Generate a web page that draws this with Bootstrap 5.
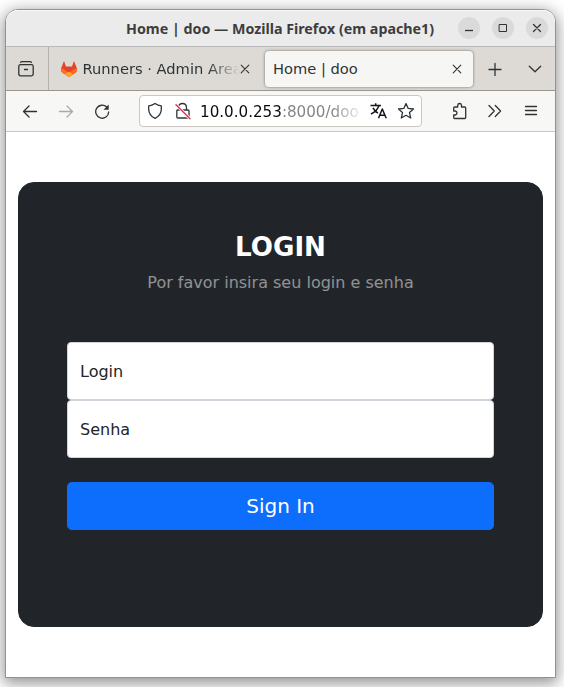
<!DOCTYPE html>
<html lang="pt-BR">
<head>
<meta charset="utf-8">
<meta name="viewport" content="width=device-width, initial-scale=1">
<title>Home | doo</title>
<link href="https://cdn.jsdelivr.net/npm/bootstrap@5.3.0/dist/css/bootstrap.min.css" rel="stylesheet">
<style>
body{font-family:"DejaVu Sans",sans-serif;background:#fff;height:687px;overflow:hidden;padding:9px 8px 9px 5px;color:#212529}
svg{display:block;flex:none;fill:none;stroke:#2e3436;stroke-width:1.3;stroke-linecap:round;stroke-linejoin:round}
.window{height:669px;border:1px solid #929292;border-radius:13px 13px 0 0;box-shadow:0 4px 14px 1px rgba(0,0,0,.36),0 2px 20px 3px rgba(0,0,0,.1);background:#fff}
.titlebar{height:37px;background:#ebebeb;border-bottom:1px solid #b9b9b9;border-radius:12px 12px 0 0;box-shadow:inset 0 1px #f9f9f9;display:grid;grid-template-columns:120px 308px 1fr;align-items:center}
.titlebar strong{font:700 14.25px "Noto Sans",sans-serif;color:#3d3d3d;white-space:nowrap}
.win-btn{width:22px;height:22px;background:#dadada;padding:0}
.tabs{height:44px;background:#dddad5;border-bottom:1px solid #9b968e}
.tabs-view{width:43px;border-right:1px solid #b4b1ac}
.tab-text{font-size:14.67px;line-height:20px;white-space:nowrap;color:#2e3436}
.fade-end{-webkit-mask-image:linear-gradient(90deg,#000 calc(100% - 32px),transparent);mask-image:linear-gradient(90deg,#000 calc(100% - 32px),transparent)}
.tab-idle{width:215px;padding-left:11px}
.tab-on{width:208px;height:36px;background:#f6f6f4;border-radius:4px;box-shadow:0 0 3px rgba(0,0,0,.5);padding:0 10px 0 8px;margin-left:1px}
.tab-x{stroke-width:1.1}
.tools{height:41px;background:#f7f7f5;border-bottom:1px solid #cbc7c2}
.address{width:283px;height:32px;background:#fff;border:1px solid #cdc7c2;border-radius:4px;margin-left:29px}
.address span{font-size:15.15px;line-height:20px;width:164px;color:#858585;white-space:nowrap;padding-top:1px}
.address b{font-weight:400;color:#0c0c0d}
.login-card{border-radius:16px;min-height:445px;--bs-card-bg:#212529;--bs-card-border-color:#212529}
.login-card h2{font-size:26.14px;line-height:31px;height:31px;padding-top:1px}
.login-card p{height:24px;padding-top:1px}
.login-card .form-control{border-radius:4px;border-color:#ced4da;background:#fff}
.login-card .form-floating>label{color:#212529;opacity:1;padding-top:17px}
.login-card .btn{border-radius:4.8px}
.gitlab-mark{stroke:none}
</style>
<script src="https://cdn.jsdelivr.net/npm/bootstrap@5.3.0/dist/js/bootstrap.bundle.min.js"></script>
</head>
<body>
<div class="window d-flex flex-column">
  <header class="titlebar">
    <span></span>
    <strong>Home | doo — Mozilla Firefox (em apache1)</strong>
    <div class="d-flex ps-4" style="gap:12px">
      <button class="win-btn border-0 rounded-circle d-flex align-items-center justify-content-center" aria-label="Minimizar"><svg width="10" height="10"><path d="M1 7.500h8" stroke-linecap="butt"/></svg></button>
      <button class="win-btn border-0 rounded-circle d-flex align-items-center justify-content-center" aria-label="Maximizar"><svg width="10" height="10"><path d="M1.500 1.500h7v7h-7z" stroke-width="1" stroke-linejoin="miter"/></svg></button>
      <button class="win-btn border-0 rounded-circle d-flex align-items-center justify-content-center" aria-label="Fechar"><svg width="10" height="10"><path d="M1.500 1.500l7 7M8.500 1.500l-7 7"/></svg></button>
    </div>
  </header>
  <div class="tabs d-flex align-items-center">
    <div class="tabs-view h-100 d-flex align-items-center ps-2"><svg class="ms-1" width="16" height="16"><path d="M2.500 1.300Q3 .7 4 .7h8q1 0 1.500 .6M2.500 3.700h11q1.700 0 1.700 1.700v7.700q0 1.700-1.700 1.700h-11q-1.700 0-1.700-1.700V5.400q0-1.700 1.700-1.700zM6.500 8.500h3"/></svg></div>
    <div class="tab-idle d-flex align-items-center">
      <svg class="gitlab-mark" width="18" height="16"><path fill="#e24329" d="M4 0L6 5.500h6L14 0l3 7.500q.7 2.500-1.500 4.300L9 16l-6.500-4.200Q.3 10 1 7.500z"/><path fill="#fc6d26" d="M1 7.500q3 .2 4.500 2L9 11.800l3.500-2.300q1.500-1.800 4.500-2 .7 2.500-1.500 4.300L9 16l-6.500-4.200Q.3 10 1 7.500z"/><path fill="#fca326" d="M9 10.700l4.200 2.600L9 16l-4.200-2.700z"/></svg>
      <div class="tab-text fade-end" style="margin-left:4.500px;width:157.500px">Runners · Admin Area</div>
      <svg class="tab-x" width="10" height="10"><path d="M1.200 1.200l7.600 7.600M8.800 1.200L1.200 8.800"/></svg>
    </div>
    <div class="tab-on d-flex align-items-center justify-content-between">
      <div class="tab-text">Home | doo</div>
      <svg class="tab-x me-0" width="12" height="10"><path d="M2.200 1.200l7.600 7.600M9.800 1.200L2.200 8.800"/></svg>
    </div>
    <svg width="14" height="14" style="margin-left:15px"><path d="M7 1.500v12M1 7.500h12"/></svg>
    <svg width="14" height="10" style="margin-left:26px"><path d="M1.300 2.300L7 7.800l5.700-5.500"/></svg>
  </div>
  <nav class="tools d-flex align-items-center" aria-label="Navegação">
    <svg width="16" height="16" style="margin-left:16px"><path d="M14.500 8.500h-13M7 3L1.500 8.500 7 14"/></svg>
    <svg width="16" height="16" style="margin-left:20px;stroke:#a9aaaa"><path d="M1.500 8.500h13M9 3l5.500 5.500L9 14"/></svg>
    <svg width="16" height="16" style="margin-left:20px"><path d="M14.700 9A6.500 6.500 0 1 1 12.700 4"/><path d="M14.700 1.500v5.200H9.500z" fill="#2e3436" stroke="none"/></svg>
    <div class="address d-flex align-items-center">
      <svg width="16" height="18" style="margin-left:7px"><path d="M8 1.500Q11 3.700 14.300 3.900V7.500Q14.100 13.500 8 16.300 1.900 13.500 1.700 7.500V3.900Q5 3.700 8 1.500z"/></svg>
      <svg width="18" height="18" style="margin-left:11px"><path d="M4.500 7.500V5.500q.2-4 4-4t4 4V7.500M3.500 8h10.500q1 0 1 1v6q0 1-1 1h-10q-1.200 0-1.200-1V9q0-1 .7-1"/><path d="M2.500 3.300L16 16.800" style="stroke:#fff;stroke-width:3"/><path d="M2 2.800L16 16.800" style="stroke:#e22850"/></svg>
      <span class="fade-end" style="margin-left:8px"><b>10.0.0.253</b>:8000/doo</span>
      <svg width="17" height="16" style="margin-left:6px;stroke:#15141a;stroke-width:1.500;stroke-linecap:butt"><path d="M.5 2.600h10.500M5.700 .3v2.300M9 2.600Q7.300 8 1 11M3 4.800q1.800 3.600 5 5.400M8.500 15.300L12.300 6l3.900 9.300M10 12.300h4.700"/></svg>
      <svg width="18" height="18" style="margin-left:10px"><path d="M9 1.500l2.200 4.900 5.300.6-4 3.600 1.200 5.400L9 13.300 4.300 16l1.200-5.400-4-3.600 5.300-.6z"/></svg>
    </div>
    <svg width="16" height="18" style="margin-left:30px"><path d="M1.700 8V6q0-1 1-1h3V3.300q.2-1.800 1.900-1.800t1.900 1.800V5h3.200q1 0 1 1v9.500q0 1-1 1h-10q-1 0-1-1v-2.500h1.600q1.700-.2 1.700-1.900T3.300 9H1.700z"/></svg>
    <svg width="16" height="14" style="margin-left:19px"><path d="M2 1.500L7.300 7 2 12.500M8.300 1.500L13.600 7l-5.300 5.500"/></svg>
    <svg width="14" height="12" style="margin-left:21px"><path d="M1.500 1.500h11M1.500 5.500h11M1.500 9.500h11"/></svg>
  </nav>
  <main style="padding:50px 12px">
    <div class="card login-card text-white">
      <div class="card-body p-5 text-center">
        <h2 class="fw-bold mb-2 text-uppercase">Login</h2>
        <p class="text-white-50 mb-5">Por favor insira seu login e senha</p>
        <form>
          <div class="form-floating"><input class="form-control" id="user" type="text" placeholder="Login"><label for="user">Login</label></div>
          <div class="form-floating mb-4"><input class="form-control" id="pass" type="password" placeholder="Senha"><label for="pass">Senha</label></div>
          <button class="btn btn-primary btn-lg w-100" type="button">Sign In</button>
        </form>
      </div>
    </div>
  </main>
</div>
</body>
</html>
